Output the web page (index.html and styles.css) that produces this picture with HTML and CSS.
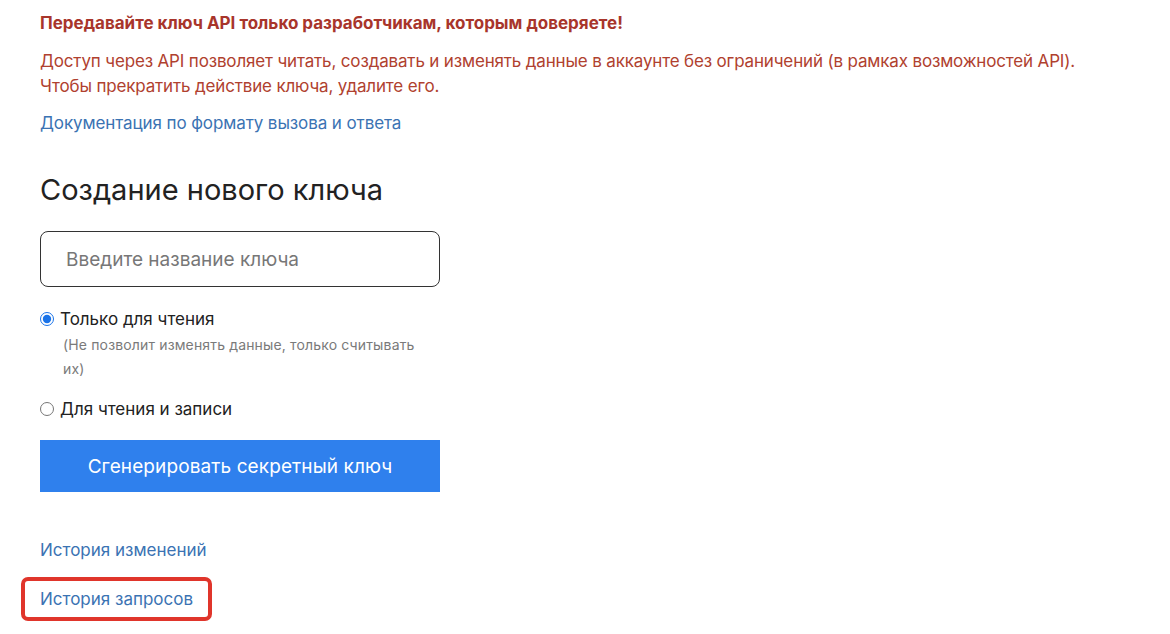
FILE: index.html
```html
<!DOCTYPE html>
<html lang="ru">
<head>
    <meta charset="UTF-8">
    <meta name="viewport" content="width=device-width, initial-scale=1.0">
    <title>Ключи API</title>
    <link rel="stylesheet" href="styles.css">
</head>
<body>
    <div class="page">
        <p class="warn-title">Передавайте ключ API только разработчикам, которым доверяете!</p>
        <p class="warn-text">Доступ через API позволяет читать, создавать и изменять данные в аккаунте без ограничений (в рамках возможностей API).<br>Чтобы прекратить действие ключа, удалите его.</p>
        <a class="link doc-link" href="#">Документация по формату вызова и ответа</a>

        <h2 class="title">Создание нового ключа</h2>

        <form class="key-form">
            <input class="key-name" type="text" placeholder="Введите название ключа">

            <label class="radio">
                <input type="radio" name="mode" checked>
                <span>Только для чтения</span>
            </label>
            <div class="radio-hint">(Не позволит изменять данные, только считывать их)</div>

            <label class="radio radio-second">
                <input type="radio" name="mode">
                <span>Для чтения и записи</span>
            </label>

            <button type="button" class="gen-btn">Сгенерировать секретный ключ</button>
        </form>

        <div class="history">
            <a class="link" href="#">История изменений</a>
            <div class="marked">
                <a class="link" href="#">История запросов</a>
            </div>
        </div>
    </div>
</body>
</html>
```

FILE: styles.css
```css
body {
    margin: 0;
    font-family: "Inter", "Noto Sans", sans-serif;
    background: #ffffff;
    color: #222222;
}
.page {
    padding: 13px 40px 0;
}
p {
    margin: 0;
}
.warn-title {
    font-size: 17px;
    font-weight: 700;
    line-height: 20px;
    color: #a8352b;
}
.warn-text {
    margin-top: 16px;
    font-size: 17px;
    line-height: 25px;
    color: #b0412f;
    letter-spacing: -0.16px;
}
.link {
    font-size: 17px;
    line-height: 20px;
    color: #3b73b3;
    text-decoration: none;
}
.doc-link {
    display: inline-block;
    margin-top: 14px;
    letter-spacing: -0.1px;
}
.title {
    margin: 39px 0 0;
    font-size: 29px;
    font-weight: 400;
    line-height: 36px;
    color: #222222;
}
.key-form {
    width: 400px;
    margin-top: 23px;
    display: flex;
    flex-direction: column;
}
.key-name {
    box-sizing: border-box;
    height: 56px;
    padding: 0 25px;
    border: 1px solid #333333;
    border-radius: 8px;
    font-family: inherit;
    font-size: 19px;
    color: #222222;
    outline: none;
}
.key-name::placeholder {
    color: #777777;
}
.radio {
    display: flex;
    align-items: center;
    gap: 6px;
    margin-top: 22px;
    font-size: 17px;
    line-height: 20px;
    color: #222222;
}
.radio input {
    margin: 0;
    width: 14px;
    height: 14px;
    accent-color: #1a73e8;
}
.radio-hint {
    margin-top: 4px;
    padding-left: 23px;
    padding-right: 20px;
    font-size: 14px;
    line-height: 24px;
    color: #7a7a7a;
    letter-spacing: 0.15px;
}
.radio-second {
    margin-top: 18px;
}
.gen-btn {
    margin-top: 21px;
    height: 52px;
    border: none;
    background: #2f80ed;
    color: #ffffff;
    font-family: inherit;
    font-size: 19px;
    letter-spacing: 0.1px;
    cursor: pointer;
}
.history {
    margin-top: 48px;
    display: flex;
    flex-direction: column;
    align-items: flex-start;
}
.marked {
    margin: 17px 0 0 -19px;
    padding: 8px 15px;
    border: 4px solid #e0352b;
    border-radius: 7px;
}
```
